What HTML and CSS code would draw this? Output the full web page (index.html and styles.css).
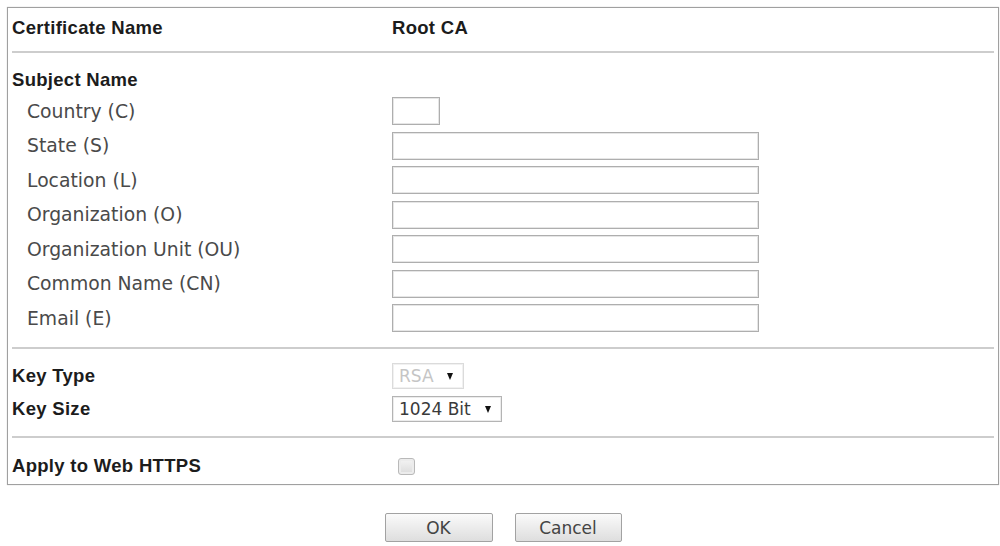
FILE: index.html
```html
<!DOCTYPE html>
<html lang="en">
<head>
  <meta charset="UTF-8">
  <meta name="viewport" content="width=device-width, initial-scale=1.0">
  <link rel="stylesheet" href="styles.css">
  <title>Certificate</title>
</head>
<body>

  <form class="cert-form">
    <div class="panel">
      <div class="row head">
        <span class="label bold">Certificate Name</span>
        <span class="bold">Root CA</span>
      </div>
      <div class="sep"></div>

      <div class="group subject">
        <div class="title bold">Subject Name</div>
        <div class="row field">
          <label class="label sub">Country (C)</label>
          <input type="text" class="text short">
        </div>
        <div class="row field">
          <label class="label sub">State (S)</label>
          <input type="text" class="text">
        </div>
        <div class="row field">
          <label class="label sub">Location (L)</label>
          <input type="text" class="text">
        </div>
        <div class="row field">
          <label class="label sub">Organization (O)</label>
          <input type="text" class="text">
        </div>
        <div class="row field">
          <label class="label sub">Organization Unit (OU)</label>
          <input type="text" class="text">
        </div>
        <div class="row field">
          <label class="label sub">Common Name (CN)</label>
          <input type="text" class="text">
        </div>
        <div class="row field">
          <label class="label sub">Email (E)</label>
          <input type="text" class="text">
        </div>
      </div>
      <div class="sep"></div>

      <div class="group keys">
        <div class="row pick">
          <span class="label bold">Key Type</span>
          <span class="select narrow disabled">
            <select disabled><option>RSA</option></select>
          </span>
        </div>
        <div class="row pick">
          <span class="label bold">Key Size</span>
          <span class="select wide">
            <select><option>1024 Bit</option><option>2048 Bit</option></select>
          </span>
        </div>
      </div>
      <div class="sep"></div>

      <div class="row apply">
        <span class="label bold">Apply to Web HTTPS</span>
        <input type="checkbox" class="check" disabled>
      </div>
    </div>

    <div class="actions">
      <button type="button" class="btn ok">OK</button>
      <button type="button" class="btn cancel">Cancel</button>
    </div>
  </form>

</body>
</html>
```

FILE: styles.css
```css
body {
  margin: 0;
  padding: 0;
  background-color: #fff;
  font-family: "DejaVu Sans", Verdana, sans-serif;
  color: #444;
}

.cert-form {
  width: 992px;
  margin: 7px 0 0 7px;
}

.panel {
  border: 1px solid #a0a0a0;
  box-shadow: 0 0 1px #c4c4c4;
}

.bold {
  font-family: "Liberation Sans", Arial, sans-serif;
  font-weight: bold;
  font-size: 18.5px;
  letter-spacing: 0.3px;
  color: #1c1c1c;
}

.row {
  display: flex;
  align-items: center;
}

.label {
  width: 380px;
  flex-shrink: 0;
  padding-left: 4px;
}

.label.sub {
  padding-left: 19px;
  width: 365px;
  font-size: 18.8px;
  color: #4a4a4a;
}

.head {
  height: 43px;
  padding-bottom: 4px;
  box-sizing: border-box;
}

.sep {
  height: 2px;
  margin: 0 4px;
  background-color: #cdcdcd;
}

/* subject name block */
.subject {
  padding: 12px 0 15px;
}

.title {
  height: 30px;
  line-height: 30px;
  padding-left: 4px;
  margin-bottom: 2px;
}

.field {
  height: 28px;
  margin-bottom: 6.5px;
}

.field:last-child {
  margin-bottom: 0;
}

.text {
  box-sizing: border-box;
  width: 367px;
  height: 28px;
  margin: 0;
  border: 1px solid #aeaeae;
  box-shadow: inset 0 0 0 1px #e6e6e6;
  background-color: #fff;
}

.text.short {
  width: 48px;
}

/* key type / size */
.keys {
  padding: 14px 0;
}

.pick {
  height: 26px;
  margin-bottom: 7px;
}

.pick:last-child {
  margin-bottom: 0;
}

.select {
  position: relative;
  display: inline-block;
}

.select select {
  appearance: none;
  -webkit-appearance: none;
  box-sizing: border-box;
  height: 26px;
  margin: 0;
  padding: 0 0 0 6px;
  border: 1px solid #b4b4b4;
  box-shadow: inset 0 0 0 1px #ececec;
  background-color: #fff;
  font-family: "DejaVu Sans", Verdana, sans-serif;
  font-size: 17px;
  color: #3a3a3a;
}

.select.narrow select {
  width: 72px;
}

.select.wide select {
  width: 110px;
}

.select.disabled select {
  color: #adadad;
  border-color: #cdcdcd;
}

/* little arrow on the right of each drop-down */
.select::after {
  content: "";
  position: absolute;
  right: 11px;
  top: 10px;
  border-left: 3.5px solid transparent;
  border-right: 3.5px solid transparent;
  border-top: 7px solid #111;
  pointer-events: none;
}

/* https row */
.apply {
  height: 46px;
  padding-top: 10px;
  box-sizing: border-box;
}

.check {
  appearance: none;
  -webkit-appearance: none;
  width: 17px;
  height: 17px;
  margin: 0 0 0 6px;
  border: 1px solid #b9b9b9;
  border-radius: 3px;
  background: linear-gradient(#f4f4f4, #dcdcdc);
  box-shadow: inset 0 0 0 2px #ececec;
}

.actions {
  display: flex;
  justify-content: center;
  gap: 22px;
  margin-top: 28px;
}

.btn {
  box-sizing: border-box;
  height: 29px;
  border: 1px solid #a2a2a2;
  border-radius: 2px;
  background: linear-gradient(#fafafa, #dedede);
  font-family: "DejaVu Sans", Verdana, sans-serif;
  font-size: 17px;
  color: #444;
  padding: 0;
}

.btn.ok {
  width: 108px;
}

.btn.cancel {
  width: 107px;
}
```
